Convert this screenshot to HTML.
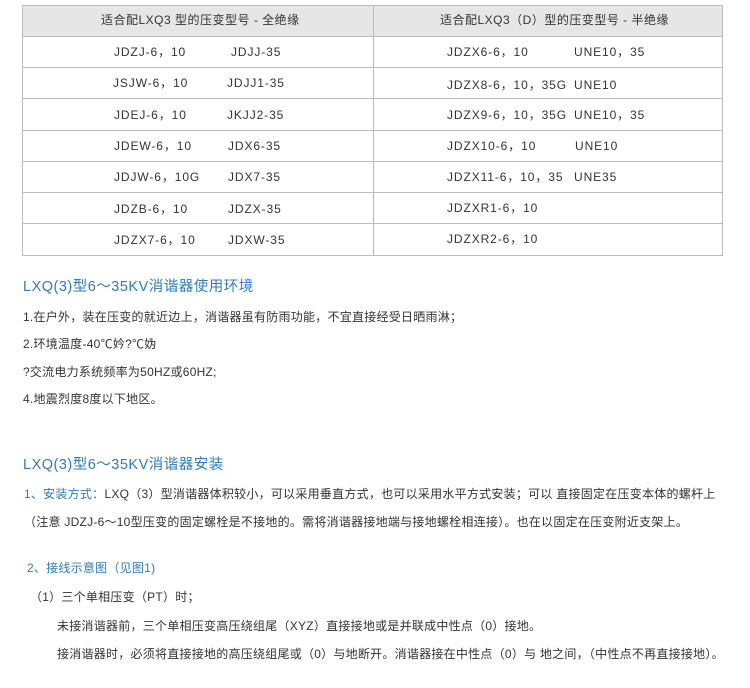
<!DOCTYPE html><html><head><meta charset="utf-8"><style>
body{margin:0;width:750px;height:688px;background:#fff;position:relative;font-family:"Liberation Sans","Noto Sans CJK SC",sans-serif;color:#333;overflow:hidden}
.a{position:absolute;white-space:nowrap;font-size:12px;line-height:14px;letter-spacing:0.25px}
.t{letter-spacing:0.9px}
.b{color:#2f7bbd}
.h{font-size:14.5px;line-height:18px;letter-spacing:0.5px}
.l{position:absolute;background:#bcbcbc}
</style></head><body>
<div style="position:absolute;left:22px;top:5px;width:700px;height:31px;background:#e6e6e6"></div>
<div class="l" style="left:22px;top:5px;width:701px;height:1px"></div>
<div class="l" style="left:22px;top:5px;width:1px;height:251px"></div>
<div class="l" style="left:373px;top:5px;width:1px;height:251px"></div>
<div class="l" style="left:722px;top:5px;width:1px;height:251px"></div>
<div class="l" style="left:22px;top:36px;width:701px;height:1px"></div>
<div class="l" style="left:22px;top:67px;width:701px;height:1px"></div>
<div class="l" style="left:22px;top:98px;width:701px;height:1px"></div>
<div class="l" style="left:22px;top:130px;width:701px;height:1px"></div>
<div class="l" style="left:22px;top:161px;width:701px;height:1px"></div>
<div class="l" style="left:22px;top:192px;width:701px;height:1px"></div>
<div class="l" style="left:22px;top:223px;width:701px;height:1px"></div>
<div class="l" style="left:22px;top:255px;width:701px;height:1px"></div>
<div class="a" style="left:101px;top:13px;letter-spacing:0.5px">适合配LXQ3 型的压变型号 - 全绝缘</div>
<div class="a" style="left:440px;top:13px;letter-spacing:0.5px">适合配LXQ3（D）型的压变型号 - 半绝缘</div>
<div class="a t" style="left:114px;top:45px">JDZJ-6，10</div><div class="a t" style="left:231px;top:45px">JDJJ-35</div>
<div class="a t" style="left:113px;top:76px">JSJW-6，10</div><div class="a t" style="left:227px;top:76px">JDJJ1-35</div>
<div class="a t" style="left:114px;top:108px">JDEJ-6，10</div><div class="a t" style="left:227px;top:108px">JKJJ2-35</div>
<div class="a t" style="left:114px;top:139px">JDEW-6，10</div><div class="a t" style="left:228px;top:139px">JDX6-35</div>
<div class="a t" style="left:114px;top:170px">JDJW-6，10G</div><div class="a t" style="left:228px;top:170px">JDX7-35</div>
<div class="a t" style="left:114px;top:202px">JDZB-6，10</div><div class="a t" style="left:228px;top:202px">JDZX-35</div>
<div class="a t" style="left:114px;top:233px">JDZX7-6，10</div><div class="a t" style="left:228px;top:233px">JDXW-35</div>
<div class="a t" style="left:447px;top:45px">JDZX6-6，10</div><div class="a t" style="left:574px;top:45px">UNE10，35</div>
<div class="a t" style="left:447px;top:78px">JDZX8-6，10，35G</div><div class="a t" style="left:574px;top:78px">UNE10</div>
<div class="a t" style="left:447px;top:108px">JDZX9-6，10，35G</div><div class="a t" style="left:574px;top:108px">UNE10，35</div>
<div class="a t" style="left:447px;top:139px">JDZX10-6，10</div><div class="a t" style="left:575px;top:139px">UNE10</div>
<div class="a t" style="left:447px;top:170px">JDZX11-6，10，35</div><div class="a t" style="left:574px;top:170px">UNE35</div>
<div class="a t" style="left:447px;top:201px">JDZXR1-6，10</div>
<div class="a t" style="left:447px;top:232px">JDZXR2-6，10</div>
<div class="a b h" style="left:23px;top:278px">LXQ(3)型6～35KV消谐器使用环境</div>
<div class="a" style="left:23px;top:310px">1.在户外，装在压变的就近边上，消谐器虽有防雨功能，不宜直接经受日晒雨淋；</div>
<div class="a" style="left:23px;top:337px">2.环境温度-40℃妗?℃妫</div>
<div class="a" style="left:23px;top:365px">?交流电力系统频率为50HZ或60HZ;</div>
<div class="a" style="left:23px;top:392px">4.地震烈度8度以下地区。</div>
<div class="a b h" style="left:23px;top:456px">LXQ(3)型6～35KV消谐器安装</div>
<div class="a" style="left:24px;top:487px"><span class="b">1、安装方式：</span>LXQ（3）型消谐器体积较小，可以采用垂直方式，也可以采用水平方式安装；可以 直接固定在压变本体的螺杆上</div>
<div class="a" style="left:24px;top:515px">（注意 JDZJ-6～10型压变的固定螺栓是不接地的。需将消谐器接地端与接地螺栓相连接）。也在以固定在压变附近支架上。</div>
<div class="a b" style="left:27px;top:561px">2、接线示意图（见图1)</div>
<div class="a" style="left:30px;top:590px">（1）三个单相压变（PT）时；</div>
<div class="a" style="left:57px;top:619px">未接消谐器前，三个单相压变高压绕组尾（XYZ）直接接地或是并联成中性点（0）接地。</div>
<div class="a" style="left:57px;top:647px">接消谐器时，必须将直接接地的高压绕组尾或（0）与地断开。消谐器接在中性点（0）与 地之间，（中性点不再直接接地）。</div>
</body></html>
